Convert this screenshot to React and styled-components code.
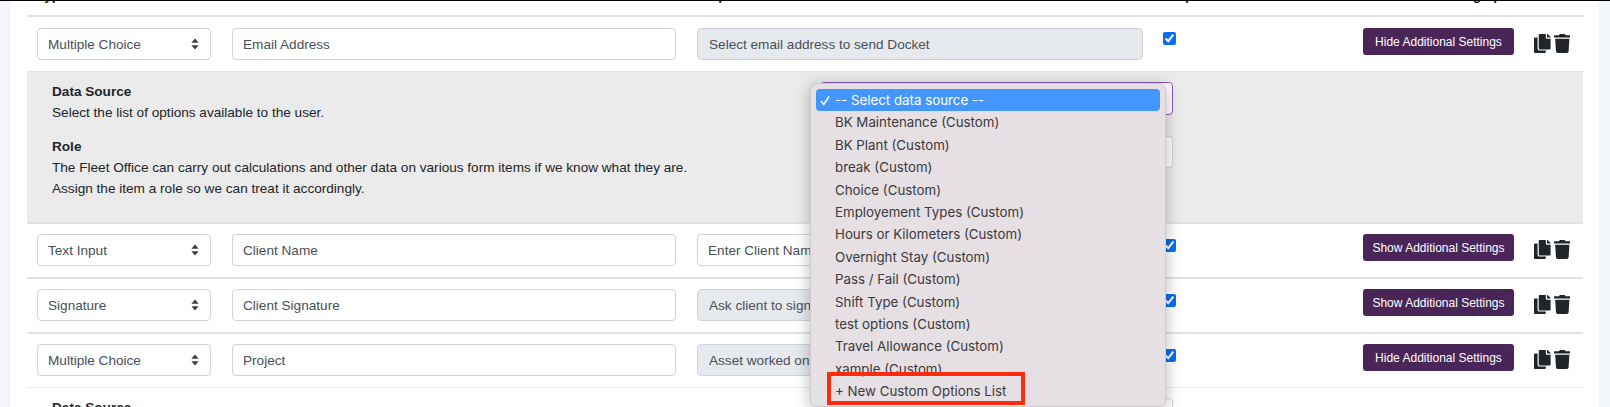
import React from "react";
import styled, { createGlobalStyle } from "styled-components";
import { FaCopy, FaTrash } from "react-icons/fa";

const Global = createGlobalStyle`
  html, body { margin: 0; padding: 0; background: #f2f6fa; }
  body { width: 1610px; height: 407px; overflow: hidden; font-family: "Liberation Sans", Arial, sans-serif; }
  * { box-sizing: border-box; }
`;

const Page = styled.div`
  position: relative;
  width: 1610px;
  height: 407px;
  overflow: hidden;
  border-top: 1px solid #000;
`;

const Card = styled.main`
  margin-left: 9px;
  width: 1590px;
  height: 406px;
  padding: 0 16px 0 17px;
  background: #fff;
  border-left: 1px solid #eceff2;
`;

const gridColumns = "195px 465px 466px 200px 171px auto";

const Header = styled.div`
  display: grid;
  grid-template-columns: ${gridColumns};
  height: 16px;
  padding-left: 10px;
  overflow: hidden;
  border-bottom: 2px solid #dee2e6;
`;

const HeaderCell = styled.div`
  margin-top: -13px;
  padding-left: ${(p) => p.$indent || 0}px;
  font-size: 13.6px;
  line-height: 15px;
  font-weight: 700;
  color: #212529;
  white-space: nowrap;
`;

const Row = styled.div`
  display: grid;
  grid-template-columns: ${gridColumns};
  padding: ${(p) => (p.$first ? 11 : 10)}px 0 11px 10px;
  border-top: ${(p) => (p.$first ? 0 : 2)}px solid #dee2e6;
`;

const Field = styled.div`
  height: 32px;
  margin-right: ${(p) => p.$gap || 21}px;
  padding: 0 11px 0 ${(p) => (p.$disabled ? 11 : 10)}px;
  display: flex;
  align-items: center;
  justify-content: space-between;
  border: 1px solid #ced4da;
  border-radius: 4px;
  background: ${(p) => (p.$disabled ? "#e6e9ee" : "#fff")};
  color: #495057;
  font-size: 13.6px;
  white-space: nowrap;
  overflow: hidden;
`;

const Caret = styled.svg`
  width: 8px;
  height: 12px;
  fill: #3a3f44;
  flex: none;
`;

const Check = styled.input.attrs({ type: "checkbox", readOnly: true, checked: true })`
  width: 13px;
  height: 13px;
  margin: ${(p) => (p.$first ? 4 : 5)}px 0 0;
  accent-color: #0b6cf2;
`;

const SettingsButton = styled.button`
  width: 151px;
  height: 27px;
  padding: 0;
  border: 0;
  border-radius: 3px;
  background: #4a2558;
  color: #fff;
  font-family: inherit;
  font-size: 12px;
`;

const Actions = styled.div`
  display: flex;
  gap: 3px;
  padding-top: 6px;
  color: #212529;
  line-height: 0;

  svg {
    width: 16.6px;
    height: 19px;
  }
`;

const Panel = styled.section`
  display: flex;
  justify-content: space-between;
  height: ${(p) => (p.$shaded ? "151px" : "auto")};
  padding: 10px 410px 0 25px;
  background: ${(p) => (p.$shaded ? "#ebebeb" : "#fff")};
  border-top: 1px solid ${(p) => (p.$shaded ? "#e2e4e6" : "#e9ecef")};
`;

const Notes = styled.div`
  margin-top: -1px;
  font-size: 13.6px;
  line-height: 21px;
  color: #212529;
`;

const NoteTitle = styled.div`
  font-weight: 700;
`;

const NoteGroup = styled.div`
  margin-bottom: 13px;
`;

const PanelSelects = styled.div`
  width: 353px;
  display: flex;
  flex-direction: column;
  gap: 21px;
`;

const PanelSelect = styled.div`
  height: ${(p) => (p.$focused ? 33 : 32)}px;
  border: 1px solid ${(p) => (p.$focused ? "#8f55b5" : "#ced4da")};
  border-radius: 4px;
  background: #fff;
`;

const Dropdown = styled.ul`
  position: absolute;
  left: 810px;
  top: 82px;
  width: 356px;
  height: 324px;
  margin: 0;
  padding: 5px 5px 0;
  list-style: none;
  overflow: hidden;
  border-radius: 7px;
  border: 1px solid #cfcacc;
  background: #e6dfe3;
  box-shadow: 0 3px 16px rgba(0, 0, 0, 0.28);
  font-family: Inter, "Liberation Sans", sans-serif;
  font-size: 13.3px;
`;

const Option = styled.li`
  position: relative;
  height: 22.4px;
  line-height: 22.4px;
  padding-left: 19px;
  border-radius: 4px;
  white-space: nowrap;
  color: ${(p) => (p.$selected ? "#fff" : "#3a3a3c")};
  background: ${(p) => (p.$selected ? "#4496ff" : "transparent")};
`;

const Tick = styled.svg`
  position: absolute;
  left: 4px;
  top: 6px;
  width: 10px;
  height: 11px;
  fill: none;
  stroke: #fff;
  stroke-width: 1.5;
`;

const RedFrame = styled.div`
  position: absolute;
  left: 16px;
  top: 288px;
  width: 198px;
  height: 33px;
  border: 4.5px solid #fe2b0e;
`;

const rows = [
  { type: "Multiple Choice", label: "Email Address", help: "Select email address to send Docket", disabled: true, action: "Hide" },
  { type: "Text Input", label: "Client Name", help: "Enter Client Name", action: "Show" },
  { type: "Signature", label: "Client Signature", help: "Ask client to sign here", disabled: true, action: "Show" },
  { type: "Multiple Choice", label: "Project", help: "Asset worked on", disabled: true, action: "Hide" },
];

const options = [
  "BK Maintenance (Custom)", "BK Plant (Custom)", "break (Custom)", "Choice (Custom)",
  "Employement Types (Custom)", "Hours or Kilometers (Custom)", "Overnight Stay (Custom)",
  "Pass / Fail (Custom)", "Shift Type (Custom)", "test options (Custom)",
  "Travel Allowance (Custom)", "xample (Custom)", "+ New Custom Options List",
];

function DataRow({ row, first }) {
  return (
    <Row $first={first}>
      <Field>
        {row.type}
        <Caret viewBox="0 0 8 12"><path d="M4 0.5 7.6 4.8H.4zM4 11.5.4 7.2h7.2z" /></Caret>
      </Field>
      <Field>{row.label}</Field>
      <Field $disabled={row.disabled} $gap={20}>{row.help}</Field>
      <div><Check $first={first} /></div>
      <div><SettingsButton>{row.action} Additional Settings</SettingsButton></div>
      <Actions><FaCopy /><FaTrash /></Actions>
    </Row>
  );
}

function SettingsPanel({ shaded }) {
  return (
    <Panel $shaded={shaded}>
      <Notes>
        <NoteGroup>
          <NoteTitle>Data Source</NoteTitle>
          Select the list of options available to the user.
        </NoteGroup>
        <NoteTitle>Role</NoteTitle>
        The Fleet Office can carry out calculations and other data on various form items if we know what they are.
        <br />
        Assign the item a role so we can treat it accordingly.
      </Notes>
      <PanelSelects>
        <PanelSelect $focused={shaded} />
        <PanelSelect />
      </PanelSelects>
    </Panel>
  );
}

export default function App() {
  return (
    <Page>
      <Global />
      <Card>
        <Header>
          <HeaderCell>Type</HeaderCell>
          <HeaderCell>Label</HeaderCell>
          <HeaderCell>Help Text</HeaderCell>
          <HeaderCell>Required</HeaderCell>
          <HeaderCell $indent={72}>Setting up</HeaderCell>
        </Header>
        <DataRow row={rows[0]} first />
        <SettingsPanel shaded />
        <DataRow row={rows[1]} />
        <DataRow row={rows[2]} />
        <DataRow row={rows[3]} />
        <SettingsPanel />
      </Card>
      <Dropdown>
        <Option $selected>
          <Tick viewBox="0 0 10 11"><path d="M1 6 3.8 9.5 9 1.5" /></Tick>
          -- Select data source --
        </Option>
        {options.map((o) => <Option key={o}>{o}</Option>)}
        <RedFrame />
      </Dropdown>
    </Page>
  );
}
